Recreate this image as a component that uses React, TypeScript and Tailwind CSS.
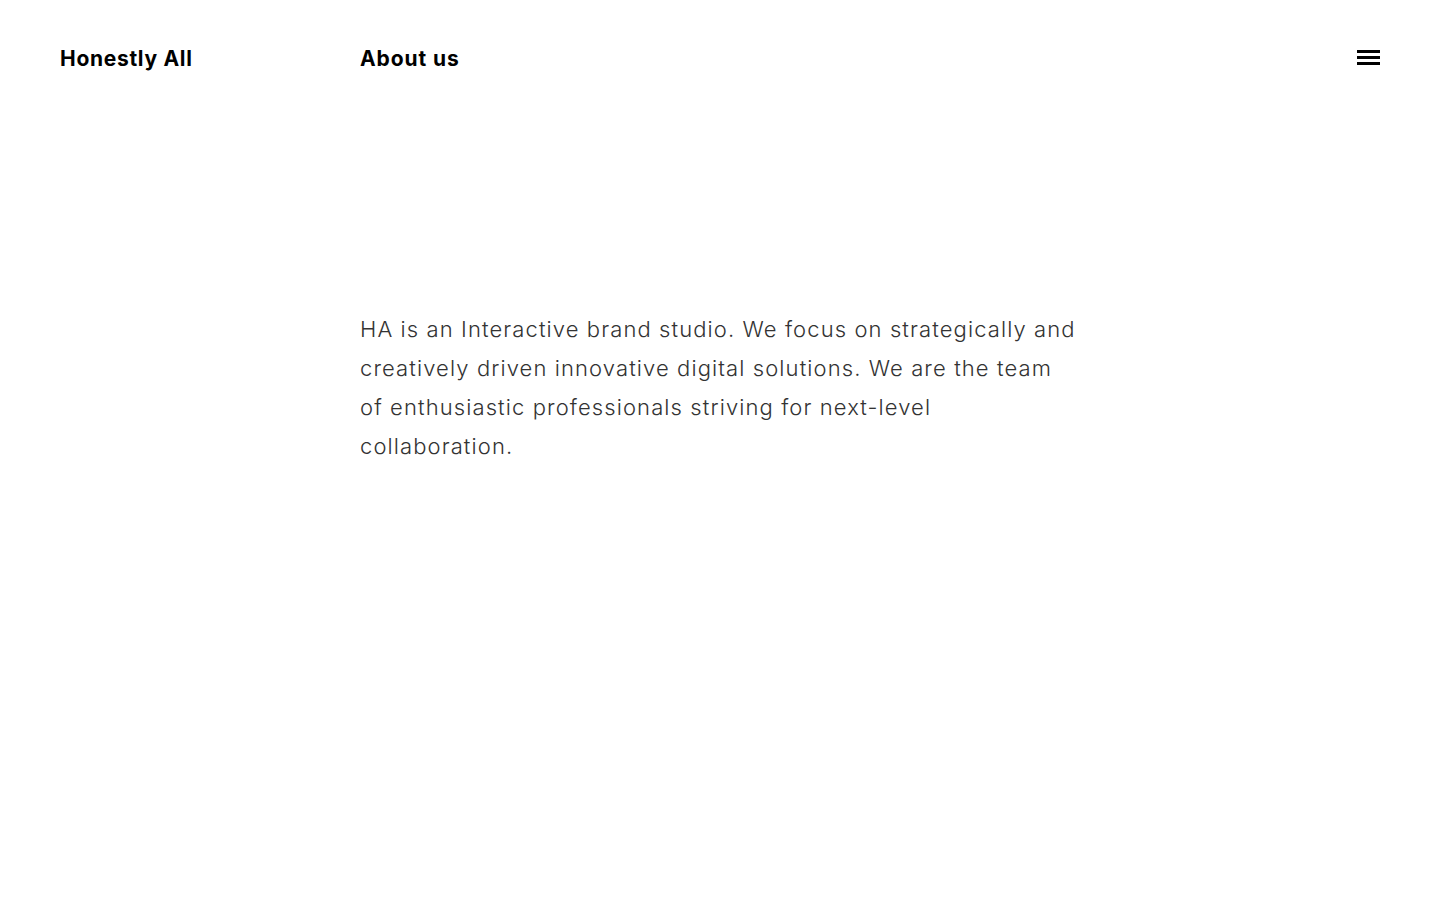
export default function App() {
  return (
    <div
      className="min-h-screen w-full bg-white text-[#111]"
      style={{ fontFamily: 'Inter, "Noto Sans", sans-serif' }}
    >
      <header className="flex h-[117px] items-center px-[60px]">
        <a href="#" className="w-[300px] text-[21px] font-bold tracking-[0.7px] text-black">
          Honestly All
        </a>
        <h1 className="text-[21px] font-bold tracking-[0.9px] text-black">About us</h1>
        <button className="mb-[2px] ml-auto flex w-[23px] flex-col gap-[3px]" aria-label="Menu">
          <span className="block h-[3px] w-full bg-black" />
          <span className="block h-[3px] w-full bg-black" />
          <span className="block h-[3px] w-full bg-black" />
        </button>
      </header>
      <main className="pl-[360px] pt-[193px]">
        <p className="w-[722px] text-[22px] font-light leading-[39px] tracking-[1.1px] text-[#333]">
          HA is an Interactive brand studio. We focus on strategically and creatively driven
          innovative digital solutions. We are the team of enthusiastic professionals striving for
          next-level collaboration.
        </p>
      </main>
    </div>
  )
}
